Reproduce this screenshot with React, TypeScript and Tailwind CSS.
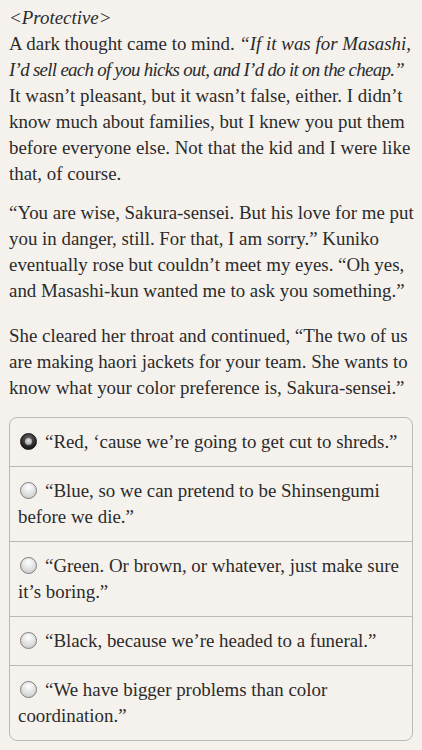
import { useState } from "react";

type Choice = { id: number; lines: string[] };

const CHOICES: Choice[] = [
  { id: 0, lines: ["“Red, ‘cause we’re going to get cut to shreds.”"] },
  { id: 1, lines: ["“Blue, so we can pretend to be Shinsengumi", "before we die.”"] },
  { id: 2, lines: ["“Green. Or brown, or whatever, just make sure", "it’s boring.”"] },
  { id: 3, lines: ["“Black, because we’re headed to a funeral.”"] },
  { id: 4, lines: ["“We have bigger problems than color", "coordination.”"] },
];

function Radio({ checked }: { checked: boolean }) {
  if (checked) {
    return (
      <span className="ml-[2px] mr-[8px] mt-[4px] inline-flex h-[17px] w-[17px] items-center justify-center rounded-full border border-[#1a1a1a] bg-[radial-gradient(circle_at_50%_35%,#707070,#1c1c1c_70%)] align-top">
        <span className="h-[7px] w-[7px] rounded-full bg-[radial-gradient(circle_at_50%_40%,#e4e4e4,#8a8a8a)]" />
      </span>
    );
  }
  return (
    <span className="ml-[2px] mr-[8px] mt-[4px] inline-block h-[17px] w-[17px] rounded-full border border-[#7c7c7c] bg-[radial-gradient(circle_at_50%_30%,#ffffff,#d0d0d0_80%)] align-top" />
  );
}

export default function App() {
  const [picked, setPicked] = useState(0);

  return (
    <div
      className="min-h-[750px] w-[422px] bg-[#f5f2ee] px-[9px] pt-[5px] text-[#2b2b2b] text-[18.9px] leading-[26px]"
      style={{ fontFamily: '"Liberation Serif", "DejaVu Serif", serif' }}
    >
      <p className="whitespace-nowrap">
        <em>&lt;Protective&gt;</em>
        <br />
        A dark thought came to mind. <em>“If it was for Masashi,</em>
        <br />
        <em className="tracking-[-0.7px]">
          I’d sell each of you hicks out, and I’d do it on the cheap.”
        </em>
        <br />
        It wasn’t pleasant, but it wasn’t false, either. I didn’t
        <br />
        know much about families, but I knew you put them
        <br />
        before everyone else. Not that the kid and I were like
        <br />
        that, of course.
      </p>
      <p className="mt-[13px] whitespace-nowrap">
        “You are wise, Sakura-sensei. But his love for me put
        <br />
        you in danger, still. For that, I am sorry.” Kuniko
        <br />
        eventually rose but couldn’t meet my eyes. “Oh yes,
        <br />
        and Masashi-kun wanted me to ask you something.”
      </p>
      <p className="mt-[19px] whitespace-nowrap">
        She cleared her throat and continued, “The two of us
        <br />
        are making haori jackets for your team. She wants to
        <br />
        know what your color preference is, Sakura-sensei.”
      </p>

      <div className="mt-[16px] overflow-hidden rounded-[8px] border border-[#b9b9b9] divide-y divide-[#b9b9b9]">
        {CHOICES.map((c) => (
          <button
            key={c.id}
            type="button"
            onClick={() => setPicked(c.id)}
            className="block w-full whitespace-nowrap px-[8px] py-[11px] text-left"
          >
            <Radio checked={picked === c.id} />
            {c.lines.map((l, i) => (
              <span key={i}>
                {i > 0 && <br />}
                {l}
              </span>
            ))}
          </button>
        ))}
      </div>
    </div>
  );
}
